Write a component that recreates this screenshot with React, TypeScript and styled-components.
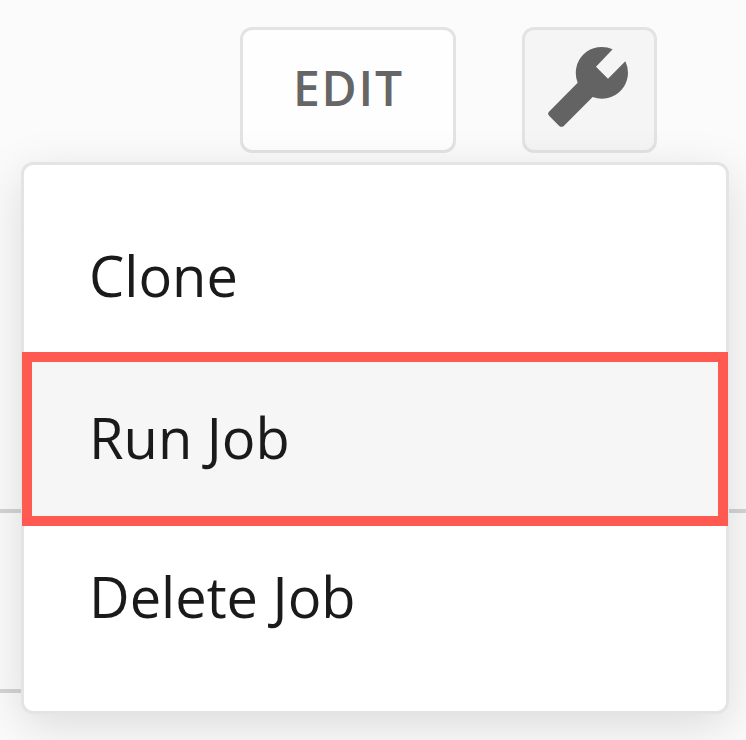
import React from "react";
import styled, { createGlobalStyle } from "styled-components";

const GlobalStyle = createGlobalStyle`
  * { box-sizing: border-box; }
  html, body { margin: 0; padding: 0; }
  body { overflow: hidden; font-family: "Open Sans", "Noto Sans", sans-serif; }
`;

const Page = styled.main`
  position: relative;
  width: 746px;
  height: 740px;
  overflow: hidden;
  background: #fbfbfb;
`;

const Toolbar = styled.header`
  display: flex;
  justify-content: flex-end;
  gap: 66px;
  height: 153px;
  padding: 27px 89px 0 0;
`;

const Button = styled.button<{ $active?: boolean }>`
  display: flex;
  align-items: center;
  justify-content: center;
  width: ${(p) => (p.$active ? 135 : 216)}px;
  height: 126px;
  padding: ${(p) => (p.$active ? "0 3px 6px 0" : "0 0 4px 1px")};
  border: 3px solid #e3e3e3;
  border-radius: 12px;
  background: ${(p) => (p.$active ? "#f5f5f5" : "#fefefe")};
  color: #666;
  font: 600 48px/1 "Open Sans", "Noto Sans", sans-serif;
  letter-spacing: 1.8px;
`;

const WrenchIcon = styled.svg`
  display: block;
  width: 84px;
  height: 84px;
  fill: #636363;
`;

const TableHead = styled.div`
  height: 360px;
  border-bottom: 4px solid #d4d4d4;
`;

const TableRow = styled.div`
  width: 700px;
  height: 180px;
  border-bottom: 4px solid #d4d4d4;
`;

const Menu = styled.ul`
  position: absolute;
  top: 162px;
  left: 21px;
  display: flex;
  flex-direction: column;
  width: 708px;
  height: 552px;
  margin: 0;
  padding: 33px 0 45px;
  list-style: none;
  background: #fff;
  border: 3px solid #e4e4e4;
  border-radius: 12px;
  box-shadow: 0 12px 48px rgba(0, 0, 0, 0.13);
`;

const MenuItem = styled.li<{ $height: number; $highlighted?: boolean }>`
  display: flex;
  flex: none;
  align-items: center;
  height: ${(p) => p.$height}px;
  margin: 0 ${(p) => (p.$highlighted ? -2 : 0)}px;
  padding: 0 0 ${(p) => (p.$highlighted ? 4 : 0)}px ${(p) => (p.$highlighted ? 57 : 65)}px;
  border: ${(p) => (p.$highlighted ? "10px solid #ff5a52" : "0")};
  background: ${(p) => (p.$highlighted ? "#f6f6f6" : "transparent")};
  color: #1a1a1a;
  font-size: 56px;
  line-height: 76px;
`;

export default function App() {
  return (
    <>
      <GlobalStyle />
      <Page>
        <Toolbar>
          <Button>EDIT</Button>
          <Button $active aria-label="Job actions">
            <WrenchIcon viewBox="0 0 252 252" aria-hidden="true">
              <path d="M200 13L150 65L186 101L238 49A78 78 0 0 1 140 156L54 242Q47 249 39 242L10 213Q3 206 9 200L95 113A78 78 0 0 1 200 13Z" />
            </WrenchIcon>
          </Button>
        </Toolbar>
        <TableHead />
        <TableRow />
        <Menu>
          <MenuItem $height={154}>Clone</MenuItem>
          <MenuItem $height={174} $highlighted>Run Job</MenuItem>
          <MenuItem $height={140}>Delete Job</MenuItem>
        </Menu>
      </Page>
    </>
  );
}
